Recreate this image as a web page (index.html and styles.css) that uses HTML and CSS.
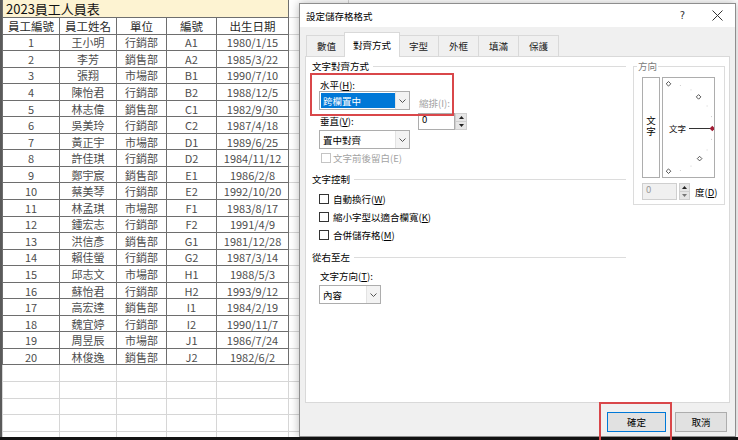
FILE: index.html
```html
<!DOCTYPE html>
<html lang="zh-Hant">
<head>
<meta charset="utf-8">
<title>設定儲存格格式</title>
<link rel="stylesheet" href="styles.css">
</head>
<body>
<div class="screen">
  <div class="sheet">
    <table class="grid">
      <colgroup><col class="ca"><col class="cb"><col class="cc"><col class="cd"><col class="ce"><col class="cf"></colgroup>
      <tr class="title"><td colspan="5">2023員工人員表</td><td class="blank"></td></tr>
      <tr class="head"><td>員工編號</td><td>員工姓名</td><td>單位</td><td>編號</td><td>出生日期</td><td class="blank"></td></tr>
      <tr><td>1</td><td>王小明</td><td>行銷部</td><td>A1</td><td>1980/1/15</td><td class="blank"></td></tr>
      <tr><td>2</td><td>李芳</td><td>銷售部</td><td>A2</td><td>1985/3/22</td><td class="blank"></td></tr>
      <tr><td>3</td><td>張翔</td><td>市場部</td><td>B1</td><td>1990/7/10</td><td class="blank"></td></tr>
      <tr><td>4</td><td>陳怡君</td><td>行銷部</td><td>B2</td><td>1988/12/5</td><td class="blank"></td></tr>
      <tr><td>5</td><td>林志偉</td><td>銷售部</td><td>C1</td><td>1982/9/30</td><td class="blank"></td></tr>
      <tr><td>6</td><td>吳美玲</td><td>行銷部</td><td>C2</td><td>1987/4/18</td><td class="blank"></td></tr>
      <tr><td>7</td><td>黃正宇</td><td>市場部</td><td>D1</td><td>1989/6/25</td><td class="blank"></td></tr>
      <tr><td>8</td><td>許佳琪</td><td>行銷部</td><td>D2</td><td>1984/11/12</td><td class="blank"></td></tr>
      <tr><td>9</td><td>鄭宇宸</td><td>銷售部</td><td>E1</td><td>1986/2/8</td><td class="blank"></td></tr>
      <tr><td>10</td><td>蔡美琴</td><td>行銷部</td><td>E2</td><td>1992/10/20</td><td class="blank"></td></tr>
      <tr><td>11</td><td>林孟琪</td><td>市場部</td><td>F1</td><td>1983/8/17</td><td class="blank"></td></tr>
      <tr><td>12</td><td>鍾宏志</td><td>行銷部</td><td>F2</td><td>1991/4/9</td><td class="blank"></td></tr>
      <tr><td>13</td><td>洪信彥</td><td>銷售部</td><td>G1</td><td>1981/12/28</td><td class="blank"></td></tr>
      <tr><td>14</td><td>賴佳螢</td><td>行銷部</td><td>G2</td><td>1987/3/14</td><td class="blank"></td></tr>
      <tr><td>15</td><td>邱志文</td><td>市場部</td><td>H1</td><td>1988/5/3</td><td class="blank"></td></tr>
      <tr><td>16</td><td>蘇怡君</td><td>行銷部</td><td>H2</td><td>1993/9/12</td><td class="blank"></td></tr>
      <tr><td>17</td><td>高宏達</td><td>銷售部</td><td>I1</td><td>1984/2/19</td><td class="blank"></td></tr>
      <tr><td>18</td><td>魏宜婷</td><td>行銷部</td><td>I2</td><td>1990/11/7</td><td class="blank"></td></tr>
      <tr><td>19</td><td>周昱辰</td><td>市場部</td><td>J1</td><td>1986/7/24</td><td class="blank"></td></tr>
      <tr><td>20</td><td>林俊逸</td><td>銷售部</td><td>J2</td><td>1982/6/2</td><td class="blank"></td></tr>
      <tr class="empty"><td></td><td></td><td></td><td></td><td></td><td></td></tr>
      <tr class="empty"><td></td><td></td><td></td><td></td><td></td><td></td></tr>
      <tr class="empty"><td></td><td></td><td></td><td></td><td></td><td></td></tr>
      <tr class="empty"><td></td><td></td><td></td><td></td><td></td><td></td></tr>
      <tr class="empty"><td></td><td></td><td></td><td></td><td></td><td></td></tr>
    </table>
  </div>
  <div class="taskbar"></div>

  <div class="dialog">
    <div class="titlebar">
      <span class="title">設定儲存格格式</span>
      <span class="help">?</span>
      <svg class="close" width="11" height="11" viewBox="0 0 11 11"><path d="M0.5 0.5L10.5 10.5M10.5 0.5L0.5 10.5" stroke="#333" stroke-width="1" fill="none"/></svg>
    </div>
    <div class="tabs">
      <div class="tab">數值</div>
      <div class="tab active">對齊方式</div>
      <div class="tab">字型</div>
      <div class="tab">外框</div>
      <div class="tab">填滿</div>
      <div class="tab">保護</div>
    </div>
    <div class="panel">
      <div class="main">
        <div class="ghead"><span>文字對齊方式</span></div>
        <div class="align-grid">
          <div class="col1">
            <div class="lbl">水平(<u>H</u>):</div>
            <div class="combo w91"><span class="val sel">跨欄置中</span><span class="arrow"><svg width="7" height="4" viewBox="0 0 7 4"><path d="M0.5 0.5L3.5 3.5L6.5 0.5" stroke="#555" fill="none"/></svg></span></div>
            <div class="lbl gap5">垂直(<u>V</u>):</div>
            <div class="combo w91 gap3"><span class="val">置中對齊</span><span class="arrow"><svg width="7" height="4" viewBox="0 0 7 4"><path d="M0.5 0.5L3.5 3.5L6.5 0.5" stroke="#555" fill="none"/></svg></span></div>
          </div>
          <div class="col2">
            <div class="lbl dis">縮排(I):</div>
            <div class="spin">
              <div class="spinbox">0</div>
              <div class="spinbtns">
                <span class="sb"><svg width="5" height="3" viewBox="0 0 5 3"><path d="M0 3L2.5 0L5 3Z" fill="#222"/></svg></span>
                <span class="sb"><svg width="5" height="3" viewBox="0 0 5 3"><path d="M0 0L2.5 3L5 0Z" fill="#222"/></svg></span>
              </div>
            </div>
          </div>
        </div>
        <div class="check dis first"><span class="box"></span>文字前後留白(E)</div>
        <div class="ghead g2"><span>文字控制</span></div>
        <div class="checks">
          <div class="check"><span class="box"></span>自動換行(<u>W</u>)</div>
          <div class="check"><span class="box"></span>縮小字型以適合欄寬(<u>K</u>)</div>
          <div class="check"><span class="box"></span>合併儲存格(<u>M</u>)</div>
        </div>
        <div class="ghead g3"><span>從右至左</span></div>
        <div class="lbl gap7">文字方向(<u>T</u>):</div>
        <div class="combo w62 gap3"><span class="val">內容</span><span class="arrow"><svg width="7" height="4" viewBox="0 0 7 4"><path d="M0.5 0.5L3.5 3.5L6.5 0.5" stroke="#555" fill="none"/></svg></span></div>
      </div>
      <fieldset class="orient">
        <legend>方向</legend>
        <div class="orient-boxes">
          <div class="vbox"><span class="vtext">文字</span></div>
          <div class="dial">
            <svg width="51" height="99" viewBox="0 0 51 99">
              <g fill="#cfcfcf">
                <rect x="16.9" y="7" width="1" height="1"/>
                <rect x="27.5" y="11.4" width="1" height="1"/>
                <rect x="43.6" y="27.5" width="1" height="1"/>
                <rect x="48" y="38.1" width="1" height="1"/>
                <rect x="48" y="60.9" width="1" height="1"/>
                <rect x="43.6" y="71.5" width="1" height="1"/>
                <rect x="27.5" y="87.6" width="1" height="1"/>
                <rect x="16.9" y="92" width="1" height="1"/>
              </g>
              <g fill="#fff" stroke="#444" stroke-width="0.9">
                <path d="M5.5 3.5L7.8 5.8L5.5 8.1L3.2 5.8Z"/>
                <path d="M35.6 16.6L37.9 18.9L35.6 21.2L33.3 18.9Z"/>
                <path d="M36.6 78.3L38.9 80.6L36.6 82.9L34.3 80.6Z"/>
                <path d="M5.5 90.9L7.8 93.2L5.5 95.5L3.2 93.2Z"/>
              </g>
              <line x1="26" y1="50.5" x2="48" y2="50.5" stroke="#333" stroke-width="1"/>
              <path d="M49.3 47.8L52 50.5L49.3 53.2L46.6 50.5Z" fill="#a01c34"/>
              <text x="6" y="53.5" class="dialtext">文字</text>
            </svg>
          </div>
        </div>
        <div class="deg-row">
          <div class="spinbox disabled w34">0</div>
          <div class="spinbtns small">
            <span class="sb"><svg width="5" height="3" viewBox="0 0 5 3"><path d="M0 3L2.5 0L5 3Z" fill="#222"/></svg></span>
            <span class="sb"><svg width="5" height="3" viewBox="0 0 5 3"><path d="M0 0L2.5 3L5 0Z" fill="#777"/></svg></span>
          </div>
          <span class="deg">度(<u>D</u>)</span>
        </div>
      </fieldset>
    </div>
    <div class="buttons">
      <div class="btn primary">確定</div>
      <div class="btn">取消</div>
    </div>
  </div>

  <div class="mark mark-h"></div>
  <div class="mark mark-ok"></div>
</div>
</body>
</html>
```

FILE: styles.css
```css
html, body {
  margin: 0;
  padding: 0;
  background: #fff;
}

.screen {
  position: relative;
  width: 738px;
  height: 440px;
  overflow: hidden;
  background: #fff;
  font-family: "Noto Sans CJK TC", "Noto Sans", sans-serif;
}

/* ---------- spreadsheet ---------- */
.sheet {
  height: 437px;
  overflow: hidden;
  border-left: 2px solid #5a5a5a;
  box-sizing: border-box;
  background: #fff;
}

.grid {
  border-collapse: collapse;
  table-layout: fixed;
  width: 346px;
  background: #fff;
}

.ca { width: 57px; }
.cb { width: 57px; }
.cc { width: 50px; }
.cd { width: 50px; }
.ce { width: 72px; }
.cf { width: 60px; }

.grid td {
  border: 1px solid #6e6e6e;
  padding: 0;
  height: 15.55px;
  line-height: 14px;
  font-size: 11px;
  color: #4d4d4d;
  text-align: center;
  white-space: nowrap;
  overflow: hidden;
  background: #fff;
}

.grid td.blank,
.grid tr.empty td {
  border-color: #d6d6d6;
}

.grid tr.title td {
  height: 16px;
  background: #fdf3d2;
  text-align: left;
  padding-left: 3px;
  font-size: 13px;
  line-height: 17px;
  color: #111;
  border-top: 0;
  overflow: visible;
}

.grid tr.title td.blank {
  background: #fff;
}

.grid tr.head td {
  font-size: 11.5px;
  color: #2a2a2a;
}

.taskbar {
  height: 3px;
  background: #141414;
}

/* ---------- dialog ---------- */
.dialog {
  position: absolute;
  left: 299px;
  top: 3px;
  width: 437px;
  height: 434px;
  box-sizing: border-box;
  border: 1px solid #8e8e8e;
  background: #f0f0f0;
  box-shadow: 0 0 9px rgba(0, 0, 0, 0.28);
  display: flex;
  flex-direction: column;
  font-size: 9.5px;
  color: #000;
}

.titlebar {
  height: 23px;
  background: #fff;
  display: flex;
  align-items: center;
  padding-left: 6px;
  padding-right: 12px;
}

.title {
  flex: 1;
  font-size: 9.5px;
  line-height: 12px;
}

.help {
  font-family: "DejaVu Sans", sans-serif;
  font-size: 10px;
  color: #333;
  margin-right: 27px;
}

.tabs {
  height: 29px;
  display: flex;
  align-items: flex-end;
  padding-left: 6px;
  position: relative;
  z-index: 1;
}

.tab {
  height: 20px;
  padding: 0 10px;
  border: 1px solid #d9d9d9;
  border-bottom: 0;
  margin-right: -1px;
  display: flex;
  align-items: center;
  line-height: 12px;
  color: #222;
  background: #f0f0f0;
}

.tab.active {
  height: 24px;
  margin: 0 -2px -1px -2px;
  padding: 0 8px;
  background: #fff;
  border-color: #d9d9d9;
  position: relative;
  z-index: 2;
  color: #000;
}

.panel {
  height: 347px;
  width: 425px;
  margin-left: 5px;
  box-sizing: border-box;
  background: #fff;
  border: 1px solid #d9d9d9;
  display: flex;
  padding-top: 3px;
}

.main {
  width: 320px;
  display: flex;
  flex-direction: column;
}

.ghead {
  height: 12px;
  display: flex;
  align-items: center;
  padding-left: 6px;
  line-height: 12px;
}

.ghead::after {
  content: "";
  flex: 1;
  border-top: 1px solid #dcdcdc;
  margin-left: 4px;
}

.ghead.g2 { margin-top: 9px; }
.ghead.g3 { margin-top: 7px; }

.lbl {
  height: 12px;
  line-height: 12px;
  padding-left: 1px;
}

.lbl.dis,
.check.dis {
  color: #a3a3a3;
}

.gap5 { margin-top: 5px; }
.gap3 { margin-top: 3px; }
.gap7 { margin-top: 7px; margin-left: 13px; }

.align-grid {
  display: flex;
  margin-top: 7px;
  padding-left: 13px;
}

.col1 {
  width: 91px;
  display: flex;
  flex-direction: column;
}

.col1 .combo:first-of-type { margin-top: 2px; }

.col2 {
  margin-left: 8px;
  padding-top: 18px;
  display: flex;
  flex-direction: column;
}

.combo {
  height: 19px;
  box-sizing: border-box;
  border: 1px solid #adadad;
  background: #fff;
  display: flex;
  align-items: stretch;
}

.w91 { width: 91px; }
.w62 { width: 62px; margin-left: 13px; }

.combo .val {
  flex: 1;
  display: flex;
  align-items: center;
  padding-left: 3px;
  line-height: 12px;
}

.combo .val.sel {
  margin: 1px 0 1px 1px;
  padding-left: 2px;
  background: #0078d7;
  color: #fff;
}

.combo .arrow {
  width: 13px;
  border-left: 1px solid #e3e3e3;
  background: #f3f3f3;
  display: flex;
  align-items: center;
  justify-content: center;
}

.spin {
  display: flex;
  margin-top: 4px;
}

.spinbox {
  width: 37px;
  height: 17px;
  box-sizing: border-box;
  border: 1px solid #adadad;
  background: #fff;
  padding-left: 3px;
  line-height: 11px;
  font-size: 9.5px;
}

.spinbox.disabled {
  background: #f0f0f0;
  border-color: #cfcfcf;
  color: #9a9a9a;
}

.w34 { width: 35px; }

.spinbtns {
  width: 12px;
  height: 17px;
  display: flex;
  flex-direction: column;
}

.spinbtns.small {
  width: 11px;
  margin-left: 2px;
}

.sb {
  flex: 1;
  display: flex;
  align-items: center;
  justify-content: center;
  background: #e6e6e6;
  border: 1px solid #cfcfcf;
}

.sb + .sb { border-top: 0; }

.check {
  height: 18px;
  display: flex;
  align-items: center;
  padding-left: 13px;
  line-height: 12px;
}

.check .box {
  width: 10px;
  height: 10px;
  box-sizing: border-box;
  border: 1px solid #333;
  background: #fff;
  margin-right: 4px;
}

.check.dis .box {
  border-color: #c4c4c4;
}

.check.first {
  height: 12px;
  margin-top: 3px;
  padding-left: 15px;
}

.check.first .box { margin-right: 2px; }

.checks {
  margin-top: 5px;
  display: flex;
  flex-direction: column;
}

/* orientation */
.orient {
  margin: 0 0 0 7px;
  padding: 5px 0 0 8px;
  width: 92px;
  height: 145px;
  box-sizing: border-box;
  border: 1px solid #dcdcdc;
  min-width: 0;
}

.orient legend {
  padding: 0 1px;
  margin-left: -5px;
  line-height: 12px;
  color: #7a7a7a;
  font-size: 9.5px;
}

.orient-boxes {
  display: flex;
  gap: 2px;
}

.vbox {
  width: 18px;
  height: 101px;
  box-sizing: border-box;
  border: 1px solid #adadad;
  display: flex;
  align-items: center;
  justify-content: center;
  padding-bottom: 1px;
}

.vtext {
  writing-mode: vertical-rl;
  letter-spacing: 1.5px;
  line-height: 12px;
}

.dial {
  width: 53px;
  height: 101px;
  box-sizing: border-box;
  border: 1px solid #adadad;
  display: flex;
}

.dialtext {
  font-family: "Noto Sans CJK TC", sans-serif;
  font-size: 8.5px;
  fill: #111;
}

.deg-row {
  display: flex;
  align-items: center;
  margin-top: 5px;
}

.deg {
  margin-left: 5px;
  line-height: 12px;
}

/* buttons */
.buttons {
  display: flex;
  justify-content: flex-end;
  margin-top: 9px;
  padding-right: 8px;
  gap: 9px;
}

.btn {
  width: 52px;
  height: 20px;
  box-sizing: border-box;
  border: 1px solid #adadad;
  background: #e1e1e1;
  display: flex;
  align-items: center;
  justify-content: center;
  line-height: 12px;
}

.btn.primary {
  width: 59px;
  border: 1px solid #0078d7;
  box-shadow: inset 0 0 0 1px #e1e1e1;
}

/* annotation overlays */
.mark {
  position: absolute;
  box-sizing: border-box;
  border: 2px solid #d9474a;
}

.mark-h {
  left: 310px;
  top: 73px;
  width: 144px;
  height: 43px;
}

.mark-ok {
  left: 599px;
  top: 402px;
  width: 73px;
  height: 41px;
}
```
